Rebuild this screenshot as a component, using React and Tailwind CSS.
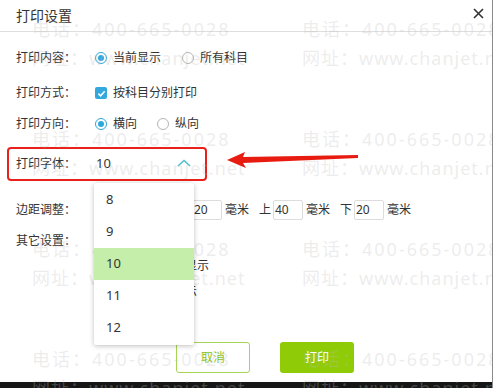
import React from "react";

const font = { fontFamily: '"Noto Sans", "Noto Sans CJK SC", sans-serif' };

function Radio({ checked, label, className = "" }) {
  return (
    <div className={`flex items-center ${className}`}>
      <span
        className={`w-[12px] h-[12px] rounded-full border flex items-center justify-center ${
          checked ? "border-[#2ea7dc]" : "border-[#b5b5b5]"
        }`}
      >
        {checked && <span className="w-[6px] h-[6px] rounded-full bg-[#2ea7dc]" />}
      </span>
      <span className="ml-[6px]">{label}</span>
    </div>
  );
}

function Check({ label }) {
  return (
    <div className="flex items-center">
      <span className="w-[12px] h-[12px] rounded-[2px] bg-[#33a8dd] flex items-center justify-center">
        <svg width="9" height="9" viewBox="0 0 10 10">
          <polyline points="1.5,5.2 4,7.5 8.5,2.5" fill="none" stroke="#fff" strokeWidth="1.8" />
        </svg>
      </span>
      <span className="ml-[6px]">{label}</span>
    </div>
  );
}

function MarginBox({ label, value }) {
  return (
    <div className="flex items-center mr-[10px]">
      <span className="w-[12px]">{label}</span>
      <span className="ml-[2px] w-[30px] h-[20px] border border-[#dcdcdc] rounded-[2px] flex items-center pl-[1px] text-[12px]">
        {value}
      </span>
      <span className="ml-[3px] w-[24px]">毫米</span>
    </div>
  );
}

function Watermark() {
  const rows = [30, 140, 250, 360];
  const cols = [32, 302];
  return (
    <div className="absolute inset-0 overflow-hidden pointer-events-none">
      {rows.map((y) =>
        cols.map((x) => (
          <React.Fragment key={`${x}-${y}`}>
            <div
              className="absolute whitespace-nowrap text-[18px] tracking-[2px] leading-none text-[rgba(190,190,190,0.28)]"
              style={{ left: x, top: y - 10 }}
            >
              电话：400-665-0028
            </div>
            <div
              className="absolute whitespace-nowrap text-[18px] tracking-[1px] leading-none text-[rgba(190,190,190,0.28)]"
              style={{ left: x, top: y + 19 }}
            >
              网址：www.chanjet.net
            </div>
          </React.Fragment>
        ))
      )}
    </div>
  );
}

export default function App() {
  const sizes = ["8", "9", "10", "11", "12"];
  return (
    <div className="relative w-[493px] h-[388px] bg-white text-[12px] text-[#333] overflow-hidden border-r border-[#8a8a8a]" style={font}>
      {/* header */}
      <div className="h-[32px] flex items-center justify-between pl-[16px] pr-[8px] border-b border-[#dedede]">
        <span className="text-[14px] text-[#333]">打印设置</span>
        <svg width="11" height="11" viewBox="0 0 11 11" className="mb-[4px]">
          <path d="M1 1 L10 10 M10 1 L1 10" stroke="#333" strokeWidth="1.6" />
        </svg>
      </div>

      {/* 打印内容 */}
      <div className="mt-[11px] h-[30px] flex items-center pl-[16px]">
        <span className="w-[79px]">打印内容：</span>
        <Radio checked label="当前显示" />
        <Radio label="所有科目" className="ml-[21px]" />
      </div>

      {/* 打印方式 */}
      <div className="mt-[5px] h-[30px] flex items-center pl-[16px]">
        <span className="w-[79px]">打印方式：</span>
        <Check label="按科目分别打印" />
      </div>

      {/* 打印方向 */}
      <div className="mt-[1px] h-[30px] flex items-center pl-[16px]">
        <span className="w-[79px]">打印方向：</span>
        <Radio checked label="横向" />
        <Radio label="纵向" className="ml-[20px]" />
      </div>

      {/* 打印字体 */}
      <div className="relative mt-[8px] ml-[7px] w-[200px] h-[34px] border-[2.5px] border-[#e8221a] rounded-[4px] flex items-center pl-[7px]">
        <span className="w-[80px]">打印字体：</span>
        <span className="text-[13px]">10</span>
        <svg width="14" height="8" viewBox="0 0 14 8" className="ml-auto mr-[14px] mb-[2px]">
          <polyline points="1,7 7,1.5 13,7" fill="none" stroke="#4ec0cf" strokeWidth="1.5" />
        </svg>

        {/* dropdown */}
        <div className="absolute left-[85px] top-[34px] w-[100px] bg-white shadow-[0_1px_5px_rgba(0,0,0,0.25)] rounded-[2px] z-20 py-[1px]">
          {sizes.map((s) => (
            <div
              key={s}
              className={`h-[32px] flex items-center pl-[12px] text-[13px] ${
                s === "10" ? "bg-[#c5eeab]" : ""
              }`}
            >
              {s}
            </div>
          ))}
        </div>
      </div>

      {/* arrow annotation */}
      <svg className="absolute left-[225px] top-[150px] z-30" width="136" height="20" viewBox="225 150 136 20">
        <polygon points="227,160 245,152 243,157 358,155 358,158 243,163 246,168" fill="#e81b10" />
      </svg>

      {/* 边距调整 */}
      <div className="mt-[14px] h-[30px] flex items-center pl-[16px]">
        <span className="w-[81px]">边距调整：</span>
        <MarginBox label="左" value="20" />
        <MarginBox label="右" value="20" />
        <MarginBox label="上" value="40" />
        <MarginBox label="下" value="20" />
      </div>

      {/* 其它设置 */}
      <div className="mt-[3px] flex pl-[16px]">
        <span className="w-[79px] h-[25px] flex items-center">其它设置：</span>
        <div className="flex flex-col">
          <div className="h-[25px] flex items-center"><Check label="打印表头" /></div>
          <div className="h-[26px] flex items-center"><Check label="本期无发生不显示" /></div>
          <div className="h-[25px] flex items-center"><Check label="余额为零不显示" /></div>
          <div className="h-[25px] flex items-center"><Check label="打印末级科目" /></div>
        </div>
      </div>

      {/* buttons */}
      <div className="mt-[13px] flex pl-[176px] gap-[30px]">
        <button className="w-[74px] h-[31px] border border-[#a6d456] rounded-[3px] text-[#88c21c] text-[12px] bg-white">
          取消
        </button>
        <button className="w-[74px] h-[31px] rounded-[3px] bg-[#8fcb06] text-white text-[12px]">
          打印
        </button>
      </div>

      {/* bottom bar */}
      <div className="absolute left-0 right-0 bottom-0 h-[6px] bg-[#161616]" />

      <Watermark />
    </div>
  );
}
